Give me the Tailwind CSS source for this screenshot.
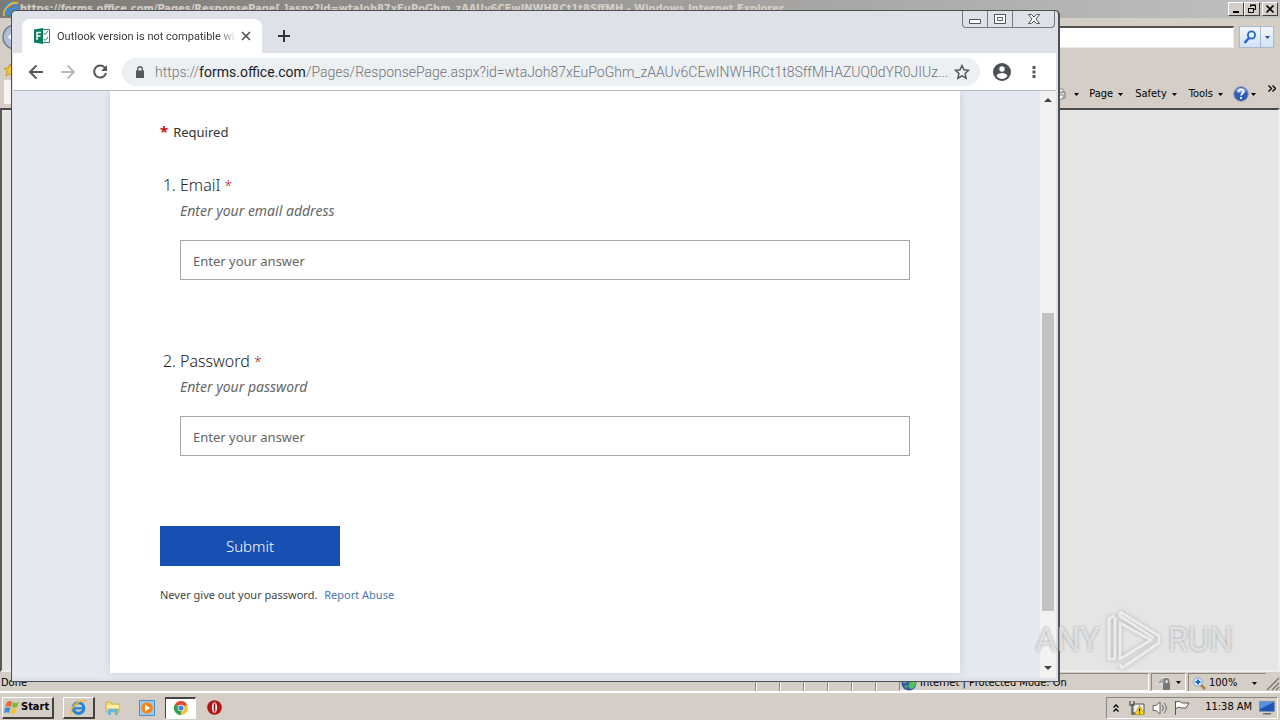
<!DOCTYPE html>
<html lang="en">
<head>
<meta charset="utf-8">
<title>Desktop</title>
<script src="https://cdn.jsdelivr.net/npm/@tailwindcss/browser@4"></script>
</head>
<body class="relative flex h-screen flex-col overflow-hidden bg-[#d5cec6] font-['DejaVu_Sans_Condensed','DejaVu_Sans',sans-serif] text-[11px] text-black">

<!-- Internet Explorer window -->
<section class="flex min-h-0 flex-1 flex-col" aria-label="Internet Explorer">
  <header class="flex h-[18px] shrink-0 items-center bg-linear-to-r from-[#7d7a75] to-[#c0c0c0] pr-[2px] pl-[3px]">
    <svg class="size-4 shrink-0" viewBox="0 0 16 16" fill="none"><circle cx="8" cy="8" r="5.4" stroke="#2f91e6" stroke-width="3"/><path d="M4 8.5h9" stroke="#2f91e6" stroke-width="2.4"/><path d="M1 15C-1 9 8 0 15 2" stroke="#f5bd22" stroke-width="1.6"/></svg>
    <h1 class="ml-px min-w-0 flex-1 truncate text-[11px] leading-4 font-bold text-[#d5cec6]">https://forms.office.com/Pages/ResponsePage[.]aspx?id=wtaJoh87xEuPoGhm_zAAUv6CEwINWHRCt1t8SffMH - Windows Internet Explorer</h1>
    <div class="flex">
      <button aria-label="Minimize" class="flex h-[14px] w-4 items-end justify-center border border-t-white border-r-[#404040] border-b-[#404040] border-l-white bg-[#d5cec6] pb-[2px]"><span class="h-[2px] w-[6px] bg-black"></span></button>
      <button aria-label="Restore" class="flex h-[14px] w-4 items-center justify-center border border-t-white border-r-[#404040] border-b-[#404040] border-l-white bg-[#d5cec6]"><svg class="size-[10px]" viewBox="0 0 10 10" fill="none" stroke="#000"><path d="M3.5 3V1.5h5v4H7M3 1h6M1.5 4.5h5v4h-5zM1 4.5h6"/></svg></button>
      <button aria-label="Close" class="ml-[2px] flex h-[14px] w-4 items-center justify-center border border-t-white border-r-[#404040] border-b-[#404040] border-l-white bg-[#d5cec6]"><svg class="size-[10px]" viewBox="0 0 10 10" stroke="#000" stroke-width="1.7"><path d="M1.5 1.5l7 7M8.5 1.5l-7 7"/></svg></button>
    </div>
  </header>
  <div class="flex h-[38px] shrink-0 items-center justify-between pr-[6px]">
    <svg class="h-7 w-8" viewBox="0 0 32 28"><circle cx="15" cy="14" r="12" fill="#aebdd3" stroke="#737b88" stroke-width="1.5"/><path d="M16 8l-6 6 6 6M10 14h12" stroke="#fff" stroke-width="3" fill="none"/></svg>
    <div class="flex items-center gap-[5px]">
      <input aria-label="Search" class="h-[22px] w-[234px] border border-t-2 border-t-[#55534f] border-r-[#efebe2] border-b-[#efebe2] border-l-[#55534f] bg-white">
      <div class="flex h-[22px] border border-[#a9bad0] bg-linear-to-b from-[#f2f7fd] to-[#d2e2f5]">
        <button aria-label="Go" class="flex w-[21px] items-center justify-center border-r border-[#a9bad0]"><svg class="size-[14px]" viewBox="0 0 14 14" fill="none" stroke="#2868c8" stroke-width="1.8"><circle cx="8.5" cy="5" r="3.6"/><path d="M6 8l-4.500 5" stroke-width="2.6"/></svg></button>
        <button aria-label="Search options" class="flex w-3 items-center justify-center"><svg class="h-[3px] w-[5px]" viewBox="0 0 5 3"><path d="M0 0h5L2.500 3z" fill="#1d4f9e"/></svg></button>
      </div>
    </div>
  </div>
  <nav class="flex h-[52px] shrink-0 items-end justify-between pr-1 pb-1">
    <div class="flex h-full w-3 flex-col justify-between">
      <svg class="ml-1 mt-2 size-3" viewBox="0 0 12 12"><path d="M6 0l2 4 4 .5-3 3 1 4.500L6 10l-4 2 1-4.500-3-3L4 4z" fill="#f4c52f" stroke="#b5851a" stroke-width=".7"/></svg>
      <span class="ml-1 h-6 w-2 bg-[#f6f3ee]"></span>
    </div>
    <div class="flex h-5 items-center">
      <button aria-label="Print" class="mr-[10px] flex items-center gap-2"><svg class="h-3 w-3" viewBox="0 0 12 12"><path d="M2 4h9v6H2z" fill="#ddd" stroke="#777"/><path d="M4 1h5v3H4zM4 7h5v4H4z" fill="#fff" stroke="#888"/></svg><svg class="h-[3px] w-[5px]" viewBox="0 0 5 3"><path d="M0 0h5L2.500 3z"/></svg></button>
      <button class="mr-3 flex items-center gap-[5px]">Page <svg class="h-[3px] w-[5px]" viewBox="0 0 5 3"><path d="M0 0h5L2.500 3z"/></svg></button>
      <button class="mr-3 flex items-center gap-[5px]">Safety <svg class="h-[3px] w-[5px]" viewBox="0 0 5 3"><path d="M0 0h5L2.500 3z"/></svg></button>
      <button class="mr-[10px] flex items-center gap-[5px]">Tools <svg class="h-[3px] w-[5px]" viewBox="0 0 5 3"><path d="M0 0h5L2.500 3z"/></svg></button>
      <button aria-label="Help" class="mr-3 flex items-center gap-[2px]"><svg class="size-4" viewBox="0 0 16 16"><circle cx="8" cy="8" r="7.200" fill="#2f5bbd" stroke="#7d8fb3"/><ellipse cx="8" cy="4.500" rx="5" ry="2.500" fill="#86a6e6"/><path d="M5.500 6c0-3.500 5.200-3.200 5 0-.1 1.600-2.400 1.700-2.400 3.600M8 11v2" stroke="#fff" stroke-width="1.800" fill="none"/></svg><svg class="h-[3px] w-[5px]" viewBox="0 0 5 3"><path d="M0 0h5L2.500 3z"/></svg></button>
      <button aria-label="More" class="mb-3"><svg class="h-[7px] w-2" viewBox="0 0 8 7" fill="none" stroke="#000" stroke-width="1.300"><path d="M.5.500l3 3-3 3M4.500.500l3 3-3 3"/></svg></button>
    </div>
  </nav>
  <div class="min-h-0 flex-1 border-2 border-t-[#4b4a48] border-r-[#f0eeea] border-b-[#efede8] border-l-[#5c5b59] bg-[#e5e5e5]"></div>
  <footer class="flex h-[21px] shrink-0 items-center border-b-2 border-white whitespace-nowrap">
    <span class="flex-1 pt-1 pl-px">Done</span>
    <div class="flex h-[18px]">
      <span class="w-6 border-l border-[#8a8680] shadow-[inset_1px_0_#fff]"></span><span class="w-6 border-l border-[#8a8680] shadow-[inset_1px_0_#fff]"></span><span class="w-6 border-l border-[#8a8680] shadow-[inset_1px_0_#fff]"></span><span class="w-6 border-l border-[#8a8680] shadow-[inset_1px_0_#fff]"></span><span class="w-6 border-l border-[#8a8680] shadow-[inset_1px_0_#fff]"></span><span class="w-6 border-l border-[#8a8680] shadow-[inset_1px_0_#fff]"></span>
      <span class="flex w-[250px] items-center gap-[3px] border border-r-white border-b-white border-t-[#8a8680] border-l-[#8a8680] pt-[3px] pl-px"><svg class="size-4" viewBox="0 0 16 16"><circle cx="8" cy="8" r="7.500" fill="#3451ae"/><path d="M2 4c4-5 6-2 5 1S4 9 2 8zM8 8c3-3 7-3 7 0s-3 6-5 6-3-4-2-6zM3 11l3-1 1 4z" fill="#4fc05a"/></svg>Internet | Protected Mode: On</span>
      <button aria-label="Privacy" class="ml-[2px] flex w-[35px] items-center justify-center gap-1 border border-t-[#8a8680] border-r-white border-b-white border-l-[#8a8680] pt-[2px]"><svg class="size-4" viewBox="0 0 16 16"><path d="M0 9C4 3 8 1 12 3l-2 5-6 1z" fill="#aaa" stroke="#eee"/><path d="M7 8h7v7H7z" fill="#777"/><path d="M8.500 8V5.500c0-2.500 4-2.500 4 0V8" stroke="#777" stroke-width="1.500" fill="none"/></svg><svg class="h-[3px] w-[5px]" viewBox="0 0 5 3"><path d="M0 0h5L2.500 3z"/></svg></button>
      <button class="ml-[2px] flex w-[78px] items-center gap-[3px] border-t border-l border-[#8a8680] pt-[2px] pl-1"><svg class="size-[13px]" viewBox="0 0 13 13" fill="none"><path d="M8 8l4 4" stroke="#b47d34" stroke-width="2.500"/><circle cx="5" cy="5" r="4.300" fill="#e6f1ff" stroke="#78a1d4"/><path d="M2.500 5h5M5 2.500v5" stroke="#176ad0" stroke-width="2"/></svg>100%<svg class="ml-3 h-[3px] w-[5px]" viewBox="0 0 5 3"><path d="M0 0h5L2.500 3z"/></svg></button>
      <svg class="mt-1 h-[14px] w-[14px]" viewBox="0 0 14 14" stroke="#77736d" stroke-width="1.400"><path d="M1 13L13 1M6 13l7-7M10 13l3-3"/></svg>
    </div>
  </footer>
</section>

<!-- Taskbar -->
<footer class="flex h-[27px] shrink-0 items-center bg-[#d5cec6] pl-[2px] pr-[2px] pt-[2px]">
  <button class="flex h-[22px] w-[52px] items-center gap-px border border-t-white border-r-2 border-r-[#45423e] border-b-2 border-b-[#45423e] border-l-white pl-px text-[11px] font-bold"><svg class="h-[15px] w-4 shrink-0" viewBox="0 0 16 15"><path d="M3 2c2-1.500 4-1 5 0L7 7C5 6 3 6 1 7z" fill="#ed6934"/><path d="M9 2c2 1.300 4 1.300 6 0l-2 5c-2 1-4 1-5 0z" fill="#7cb83b"/><path d="M1 8c2-1 4-1 5.500 0L5 13c-1.500-1.200-3.500-1-5 0z" fill="#3d8ed8"/><path d="M7.500 8c2 1 3.500 1 5.500 0l-1.500 5c-2 1-4 1-5.500 0z" fill="#f6c431"/></svg>Start</button>
  <button aria-label="Internet Explorer" class="ml-[9px] flex h-[22px] w-8 items-center justify-center border border-t-white border-r-2 border-r-[#45423e] border-b-2 border-b-[#45423e] border-l-white"><svg class="size-[17px]" viewBox="0 0 16 16" fill="none"><circle cx="8" cy="8.500" r="5" stroke="#2684d9" stroke-width="3"/><path d="M4 8.800h9" stroke="#2684d9" stroke-width="2.200"/><path d="M1 15C-1 9 8 0 15 2" stroke="#f5bd22" stroke-width="1.500"/></svg></button>
  <button aria-label="Explorer" class="ml-[10px]"><svg class="size-4" viewBox="0 0 16 16"><path d="M1 2h5l1 2h7v8H1z" fill="#f2d675" stroke="#d1b04b"/><path d="M2 5h12v3H2z" fill="#fff0ad"/><path d="M3 15V9h10v6h-3v-3H6v3z" fill="#65b8df"/></svg></button>
  <button aria-label="Media Player" class="ml-[18px]"><svg class="size-4" viewBox="0 0 16 16"><path d="M.5.500h15v15H.5z" fill="#9ec9ef" stroke="#4c8fcb"/><circle cx="8" cy="8" r="5.800" fill="#f38718"/><path d="M6 4.500l5 3.500-5 3.500z" fill="#fff"/></svg></button>
  <button aria-label="Chrome" class="ml-[10px] flex h-[22px] w-[31px] items-center justify-center border border-t-2 border-t-[#45423e] border-r-white border-b-white border-l-[#45423e] bg-white"><svg class="size-[14px]" viewBox="0 0 16 16"><circle cx="8" cy="8" r="8" fill="#f6c433"/><path d="M8 8L1 4a8 8 0 0 1 14 0z" fill="#de4a3c"/><path d="M8 8v8A8 8 0 0 1 1 4z" fill="#34a256"/><circle cx="8" cy="8" r="3.800" fill="#fff"/><circle cx="8" cy="8" r="3" fill="#4285e7"/></svg></button>
  <button aria-label="Opera" class="ml-[11px]"><svg class="size-[15px]" viewBox="0 0 15 15"><circle cx="7.500" cy="7.500" r="7.300" fill="#b3141a"/><ellipse cx="7.500" cy="7.500" rx="2.600" ry="5.300" fill="#f4efec"/><path d="M7.500 3.500v8" stroke="#8c1015" stroke-width="1.500"/></svg></button>
  <div class="ml-auto flex h-[22px] w-[172px] items-center justify-between border border-t-[#8a8680] border-r-white border-b-white border-l-[#8a8680] pr-[2px] pl-[6px]">
    <button aria-label="Show hidden icons"><svg class="h-2 w-[6px]" viewBox="0 0 6 8" fill="none" stroke="#000" stroke-width="1.400"><path d="M.5 3.500L3 1l2.500 2.500M.5 7.500L3 5l2.500 2.500"/></svg></button>
    <svg class="ml-[3px] size-4" viewBox="0 0 16 16"><path d="M4 4h11v9H4z" fill="#eee" stroke="#555"/><path d="M1 1v4h4V1M3 5v9h4" stroke="#555" stroke-width="1.300" fill="none"/><path d="M10.500 5.500l5 9h-10z" fill="#ffdc20" stroke="#a78300" stroke-width=".7"/><path d="M10.500 8.500v3m0 1v1" stroke="#000" stroke-width="1.300"/></svg>
    <svg class="size-4" viewBox="0 0 16 16" fill="none" stroke="#666"><path d="M1 5.500h3L8 2v12l-4-3.500H1z" fill="#fafafa"/><path d="M10 5c1.500 2 1.500 4 0 6M12 3c3 3 3 7 0 10"/></svg>
    <svg class="size-4" viewBox="0 0 16 16" fill="#fff" stroke="#555"><path d="M1.500 1v14M2 2c3-1.500 5 0 6 1h7l-3 5H8C6 7 4 7 2 8.500"/></svg>
    <time class="ml-2 whitespace-nowrap">11:38 AM</time>
    <svg class="h-[14px] w-4" viewBox="0 0 16 14"><path d="M.5.500h15v10H.5z" fill="#2055b5" stroke="#7e92b2"/><path d="M1 1h14L1 8z" fill="#5790e0"/><path d="M4 12h8v1.500H4z" fill="#667"/></svg>
  </div>
</footer>

<!-- Chrome window, floating above the desktop -->
<main class="absolute top-[10px] right-[220px] bottom-[38px] left-[11px] flex flex-col overflow-hidden rounded-t-[5px] border border-r-2 border-[#4d4f54] bg-[#dfe1e8] pr-[2px] pb-[3px] pl-px">
  <header class="flex h-[42px] shrink-0 items-end">
    <div class="ml-[9px] flex h-[34px] w-[240px] items-center rounded-t-lg bg-white pr-[11px] pl-3">
      <svg class="size-4 shrink-0" viewBox="0 0 16 16"><path d="M8 1.500h7.500v13H8z" fill="#fff" stroke="#16836a"/><path d="M9.500 5l1.500 1.500L14 3M9.500 11l1.500 1.500L14 9" stroke="#16836a" fill="none"/><path d="M0 1.500L9 0v16l-9-1.500z" fill="#087c61"/><path d="M3 12V4.500h4M3 8h3.500" stroke="#fff" stroke-width="1.500" fill="none"/></svg>
      <span class="ml-[7px] min-w-0 flex-1 bg-linear-to-r from-[#303236] from-90% to-[#ddd] bg-clip-text pt-px font-['Roboto',sans-serif] text-[11px] leading-4 whitespace-nowrap text-transparent">OutIook version is not compatible wit</span>
      <button aria-label="Close tab" class="ml-[7px]"><svg class="size-[10px]" viewBox="0 0 10 10" stroke="#505358" stroke-width="1.700"><path d="M1 1l8 8M9 1L1 9"/></svg></button>
    </div>
    <button aria-label="New tab" class="mb-[11px] ml-4"><svg class="size-3" viewBox="0 0 12 12" stroke="#303438" stroke-width="2"><path d="M6 0v12M0 6h12"/></svg></button>
    <div class="mr-px ml-auto flex h-[17px] self-start rounded-b border border-t-0 border-[#777b84]">
      <button aria-label="Minimize" class="flex w-[25px] items-center justify-center border-r border-[#777b84]"><svg class="mt-1 h-[5px] w-3" viewBox="0 0 12 5"><path d="M.5.500h11v4H.5z" fill="#fff" stroke="#50545c"/></svg></button>
      <button aria-label="Maximize" class="flex w-[25px] items-center justify-center border-r border-[#777b84]"><svg class="h-[10px] w-3" viewBox="0 0 12 10" fill="#fff" stroke="#50545c"><path d="M.5.500h11v9H.5zM3.500 3.500h5v3h-5z"/></svg></button>
      <button aria-label="Close" class="flex w-[41px] items-center justify-center"><svg class="h-[10px] w-3" viewBox="0 0 12 10" fill="#fff" stroke="#50545c"><path d="M.5.500h3L6 3 8.500.500h3L8 5l3.500 4.500h-3L6 7 3.500 9.500h-3L4 5z"/></svg></button>
    </div>
  </header>
  <nav class="flex h-[38px] shrink-0 items-center border-b border-[#b8bbbf] bg-white pr-5 pl-[15px]">
    <button aria-label="Back"><svg class="size-4" viewBox="0 0 16 16" fill="none" stroke="#55585d" stroke-width="2"><path d="M15 8H2M8.500 1.500L2 8l6.500 6.500"/></svg></button>
    <button aria-label="Forward" class="ml-4"><svg class="size-4" viewBox="0 0 16 16" fill="none" stroke="#b9bbbe" stroke-width="2"><path d="M1 8h13M7.500 1.500L14 8l-6.500 6.500"/></svg></button>
    <button aria-label="Reload" class="ml-4"><svg class="size-4" viewBox="0 0 16 16" fill="none" stroke="#55585d" stroke-width="2"><path d="M13 4a6 6 0 1 0 1 5"/><path d="M15 1v6H9z" fill="#55585d" stroke="none"/></svg></button>
    <div class="ml-[14px] flex h-7 min-w-0 flex-1 items-center rounded-full bg-[#edf0f3] pr-[10px] pl-[14px]">
      <svg class="h-3 w-2 shrink-0" viewBox="0 0 8 12"><path d="M0 4.500h8V12H0z" fill="#55585d"/><path d="M1.700 5V3c0-3 4.600-3 4.600 0v2" fill="none" stroke="#55585d" stroke-width="1.300"/></svg>
      <a href="#" class="ml-[11px] min-w-0 flex-1 font-['Roboto',sans-serif] text-[14px] leading-5 font-light whitespace-nowrap text-[#6f7378]">https://<span class="font-normal text-[#202124]">forms.office.com</span>/Pages/ResponsePage.aspx?id=wtaJoh87xEuPoGhm_zAAUv6CEwINWHRCt1t8SffMHAZUQ0dYR0JIUz...</a>
      <button aria-label="Bookmark" class="ml-3"><svg class="size-4" viewBox="0 0 16 16" fill="none" stroke="#55585d" stroke-width="1.500"><path d="M8 1.500l2 4.300 4.500.500-3.400 3.100 1 4.800L8 11.800l-4.100 2.400 1-4.800L1.500 6.300 6 5.800z"/></svg></button>
    </div>
    <button aria-label="Profile" class="ml-[13px]"><svg class="size-[18px]" viewBox="0 0 18 18"><circle cx="9" cy="9" r="9" fill="#4d5055"/><circle cx="9" cy="6" r="2.700" fill="#fff"/><path d="M3.500 13c1-4 10-4 11 0-3 4-8 4-11 0z" fill="#fff"/></svg></button>
    <button aria-label="Menu" class="ml-[21px]"><svg class="h-3 w-1" viewBox="0 0 4 12" fill="#55585d"><path d="M.5 0h3v3h-3zM.5 4.500h3v3h-3zM.5 9h3v3h-3z"/></svg></button>
  </nav>
  <div class="flex min-h-0 flex-1 bg-[#e4e9f1]">
    <div class="min-w-0 flex-1 overflow-hidden pr-20 pb-[5px] pl-[97px]">
      <form class="h-full bg-white px-[50px] pt-[30px] font-['Noto_Sans',sans-serif] text-[#333] shadow-[0_0_8px_#c8ced8]">
        <p class="text-[13px] leading-5"><span class="mr-[5px] text-[15px] font-bold text-[#c9141e]">*</span>Required</p>
        <div class="mt-[31px]">
          <label for="email" class="flex gap-1 text-[16px] leading-6 font-light text-[#222]"><span class="w-4 text-right">1.</span><span>EmaiI <span class="text-[14px] text-[#a81c25]">*</span></span></label>
          <p class="mt-[3px] ml-5 text-[14px] leading-5 text-[#666] italic">Enter your email address</p>
          <input id="email" type="text" placeholder="Enter your answer" class="mt-[19px] ml-5 block h-10 w-[calc(100%-20px)] border border-[#a6a6a6] bg-white px-3 pt-[2px] text-[13px] placeholder:text-[#666]">
        </div>
        <div class="mt-[69px]">
          <label for="password" class="flex gap-1 text-[16px] leading-6 font-light text-[#222]"><span class="w-4 text-right">2.</span><span>Password <span class="text-[14px] text-[#a81c25]">*</span></span></label>
          <p class="mt-[3px] ml-5 text-[14px] leading-5 text-[#666] italic">Enter your password</p>
          <input id="password" type="text" placeholder="Enter your answer" class="mt-[19px] ml-5 block h-10 w-[calc(100%-20px)] border border-[#a6a6a6] bg-white px-3 pt-[2px] text-[13px] placeholder:text-[#666]">
        </div>
        <button type="button" class="mt-[70px] block h-10 w-[180px] bg-[#174fb2] text-[15px] font-light text-white">Submit</button>
        <p class="mt-[19px] text-[11px] leading-5 text-[#444]">Never give out your password. <a href="#" class="ml-1 text-[#4678b4]">Report Abuse</a></p>
      </form>
    </div>
    <div class="flex w-4 flex-col items-center bg-[#f2f2f2] pt-[7px] pb-[8px]">
      <svg class="h-1 w-2" viewBox="0 0 8 4"><path d="M0 4l4-4 4 4z" fill="#444"/></svg>
      <div class="flex w-3 flex-1 flex-col"><span class="flex-[211]"></span><span class="flex-[298] bg-[#c1c1c1]"></span><span class="flex-[55]"></span></div>
      <svg class="h-1 w-2" viewBox="0 0 8 4"><path d="M0 0l4 4 4-4z" fill="#444"/></svg>
    </div>
  </div>
</main>

<!-- Watermark -->
<div class="pointer-events-none absolute right-[47px] bottom-[48px] flex items-center gap-[6px] font-['Roboto',sans-serif] text-[33px] leading-[64px] text-white/60 [text-shadow:0_0_3px_#999]">
  <span>ANY</span>
  <svg class="h-[62px] w-[56px] drop-shadow-[0_0_2px_#aaa]" viewBox="0 0 54 62" fill="none" stroke="#f2f2f2" stroke-opacity=".85" stroke-width="3" stroke-linejoin="round"><path d="M13 14v36l31-19z"/><path d="M8 50H2V10l5-3M8 50V8M13 3l39 24v7L15 59l-2-4M13 3v4l34 22"/></svg>
  <span>RUN</span>
</div>
</body>
</html>
